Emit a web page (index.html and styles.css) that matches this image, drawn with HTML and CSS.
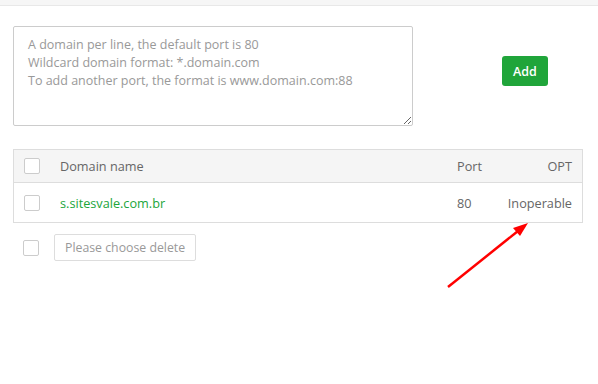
FILE: index.html
```html
<!DOCTYPE html>
<html>
<head>
<meta charset="utf-8">
<link rel="stylesheet" href="styles.css">
</head>
<body>
<div class="topbar"></div>
<div class="content">
  <div class="add-row">
    <textarea class="domains" placeholder="A domain per line, the default port is 80
Wildcard domain format: *.domain.com
To add another port, the format is www.domain.com:88"></textarea>
    <button class="btn-add">Add</button>
  </div>
  <div class="table">
    <div class="tr th">
      <div class="c-check"><span class="cb"></span></div>
      <div class="c-name">Domain name</div>
      <div class="c-port">Port</div>
      <div class="c-opt">OPT</div>
    </div>
    <div class="tr">
      <div class="c-check"><span class="cb"></span></div>
      <div class="c-name link">s.sitesvale.com.br</div>
      <div class="c-port">80</div>
      <div class="c-opt">Inoperable</div>
    </div>
  </div>
  <div class="batch">
    <span class="cb"></span>
    <button class="btn-del">Please choose delete</button>
  </div>
</div>
<svg class="arrow" width="598" height="384" viewBox="0 0 598 384">
  <line x1="448" y1="287" x2="518" y2="231" stroke="#f00" stroke-width="2.5"/>
  <polygon points="528,223 513,228 520,236" fill="#f00"/>
</svg>
</body>
</html>
```
FILE: styles.css
```css
* { box-sizing: border-box; }
body {
  margin: 0;
  width: 598px;
  height: 384px;
  background: #fff;
  font-family: "Open Sans", "Noto Sans", sans-serif;
  position: relative;
  overflow: hidden;
}
.topbar {
  height: 6px;
  background: #f6f6f6;
  border-bottom: 1px solid #e8e8e8;
}
.content {
  padding: 20px 15px 0 13px;
}
.add-row {
  display: flex;
  align-items: center;
}
.domains {
  width: 400px;
  height: 100px;
  border: 1px solid #ccc;
  border-radius: 2px;
  padding: 9px 14px;
  font-family: inherit;
  font-size: 12.5px;
  line-height: 18px;
  resize: both;
  margin: 0;
}
.domains::placeholder { color: #999; }
.btn-add {
  margin-left: 89px;
  width: 46px;
  height: 30px;
  background: #20a53a;
  color: #fff;
  border: 0;
  border-radius: 3px;
  font-family: inherit;
  font-weight: 600;
  font-size: 12.5px;
  padding: 0;
  margin-top: -10px;
}
.table {
  margin-top: 23px;
  width: 570px;
  border: 1px solid #ddd;
}
.tr {
  display: flex;
  align-items: center;
  height: 39px;
  color: #666;
  font-size: 12.7px;
}
.tr.th {
  height: 33px;
  background: #f5f5f5;
  border-bottom: 1px solid #ddd;
}
.c-check { width: 46px; padding-left: 10px; display: flex; }
.c-name { flex: 1; }
.c-port { width: 50px; }
.c-opt { width: 75px; text-align: right; padding-right: 10px; }
.link { color: #20a53a; }
.cb {
  display: inline-block;
  width: 16px;
  height: 16px;
  border: 1px solid #ccc;
  border-radius: 2px;
  background: #fff;
}
.batch {
  display: flex;
  align-items: center;
  margin-top: 11px;
  padding-left: 10px;
}
.btn-del {
  margin-left: 15px;
  height: 27px;
  padding: 0 10px;
  border: 1px solid #ddd;
  border-radius: 2px;
  background: #fff;
  color: #999;
  font-family: inherit;
  font-size: 12.3px;
}
.arrow {
  position: absolute;
  left: 0;
  top: 0;
  pointer-events: none;
}
```
